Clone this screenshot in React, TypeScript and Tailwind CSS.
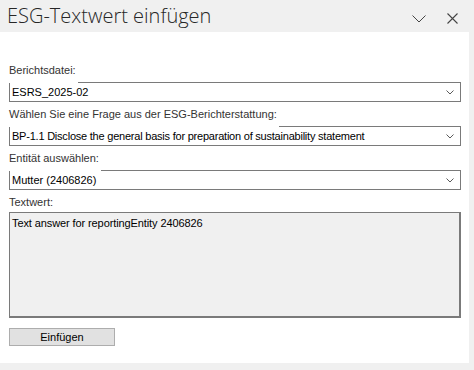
const FIELDS = [
  { label: 'Berichtsdatei:', value: 'ESRS_2025-02', tight: false },
  {
    label: 'Wählen Sie eine Frage aus der ESG-Berichterstattung:',
    value: 'BP-1.1 Disclose the general basis for preparation of sustainability statement',
    tight: true,
  },
  { label: 'Entität auswählen:', value: 'Mutter (2406826)', tight: false },
];

function SmallChevron() {
  return (
    <svg width="8" height="5" viewBox="0 0 8 5" className="shrink-0">
      <path d="M0.5 0.5 L4 4 L7.5 0.5" fill="none" stroke="#5a5a5a" strokeWidth="1" />
    </svg>
  );
}

export default function App() {
  return (
    <div className="w-[474px] h-[370px] bg-[#f0f0f0] overflow-hidden font-['Liberation_Sans',Arial,sans-serif]">
      {/* Title bar */}
      <div className="h-[32px] flex items-center justify-between pl-[7px] pr-[16px]">
        <h1 className="text-[20px] leading-[32px] font-light text-[#262626] font-['Open_Sans','Noto_Sans',sans-serif]">
          ESG-Textwert einfügen
        </h1>
        <div className="flex items-center gap-[21px] pt-[5px]">
          <svg width="14" height="8" viewBox="0 0 14 8">
            <path d="M0.5 0.5 L7 7 L13.5 0.5" fill="none" stroke="#444" strokeWidth="1" />
          </svg>
          <svg width="11" height="11" viewBox="0 0 11 11">
            <path d="M0.5 0.5 L10.5 10.5 M10.5 0.5 L0.5 10.5" fill="none" stroke="#444" strokeWidth="1.1" />
          </svg>
        </div>
      </div>

      {/* Panel */}
      <div className="w-[469px] h-[331px] bg-white pl-[9px] pr-[8px] pt-[31px] text-[11px] text-[#1a1a1a]">
        {FIELDS.map((f) => (
          <div key={f.label} className="mb-[5px]">
            <div className="relative z-10 w-fit bg-white pr-[2px] h-[20px] leading-[14px] text-[#333]">
              {f.label}
            </div>
            <div className="-mt-[1px] h-[20px] border border-[#7a7a7a] bg-white flex items-center justify-between pl-[2px] pr-[6px]">
              <span className={f.tight ? 'leading-[18px] text-black tracking-[-0.22px]' : 'leading-[18px] text-black'}>
                {f.value}
              </span>
              <SmallChevron />
            </div>
          </div>
        ))}

        <div className="mt-[4px] h-[17px] leading-[14px] text-[#333]">Textwert:</div>
        <div className="h-[106px] border border-[#7a7a7a] border-r-2 border-b-2 bg-[#f0f0f0] px-[2px] pt-[3px] leading-[14px] text-black tracking-[-0.1px]">
          Text answer for reportingEntity 2406826
        </div>

        <button className="mt-[10px] w-[106px] h-[18px] bg-[#e1e1e1] border border-[#adadad] text-[11px] leading-[16px] text-black">
          Einfügen
        </button>
      </div>
    </div>
  );
}
